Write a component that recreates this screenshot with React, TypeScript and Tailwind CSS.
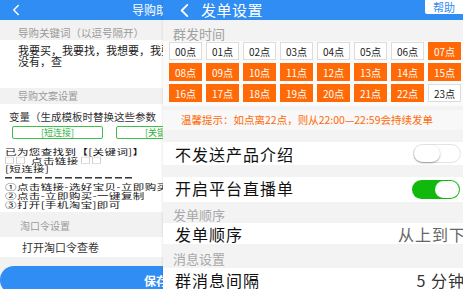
const HOURS = Array.from({ length: 24 }, (_, i) => i);
const ACTIVE = new Set([7, 8, 9, 10, 11, 12, 13, 14, 15, 16, 17, 18, 19, 20, 21, 22]);

const Back = ({ size }: { size: number }) => (
  <svg width={size} height={size} viewBox="0 0 16 16" className="shrink-0">
    <polyline points="11,2 5,8 11,14" fill="none" stroke="white" strokeWidth="2" strokeLinecap="round" strokeLinejoin="round" />
  </svg>
);

// missing-glyph boxes as the phone shows them
const Box = () => <span className="inline-block w-[9px] h-[10px] mr-[2px] border border-[#cfcfcf]" />;

const Toggle = ({ on }: { on: boolean }) =>
  on ? (
    <div className="relative w-[48px] h-[19px] shrink-0 rounded-full bg-[#10b90c]">
      <div className="absolute right-[1px] top-[1px] w-[24px] h-[17px] rounded-full bg-white" />
    </div>
  ) : (
    <div className="relative w-[48px] h-[19px] shrink-0 rounded-full bg-white border border-[#e3e3e3]">
      <div className="absolute left-0 top-0 w-[26px] h-[17px] rounded-full bg-white shadow-[0_1px_2px_rgba(0,0,0,0.35)]" />
    </div>
  );

const GuidePanel = () => (
  <div className="w-[163px] h-[289px] shrink-0 overflow-hidden bg-[#f2f2f2] flex flex-col">
    <div className="h-[20px] shrink-0 bg-[#2f8df3] flex items-center text-white">
      <div className="ml-[10px]">
        <Back size={12} />
      </div>
      <span className="ml-[110px] shrink-0 text-[12px] whitespace-nowrap">导购助手</span>
    </div>
    <div className="h-[20px] shrink-0 pl-[18px] pt-[6px] text-[10.5px] leading-[14px] text-[#9a9a9a] whitespace-nowrap">
      导购关键词（以逗号隔开）
    </div>
    <div className="h-[48px] shrink-0 bg-white pl-[18px] pt-[5px] text-[11px] leading-[11px] text-[#222] whitespace-nowrap">
      <div>我要买，我要找，我想要，我要</div>
      <div>没有，查</div>
    </div>
    <div className="h-[16px] shrink-0 flex items-end pl-[18px] pb-[1px] text-[10px] text-[#9a9a9a]">
      导购文案设置
    </div>
    <div className="h-[108px] shrink-0 bg-white pt-[7px] whitespace-nowrap overflow-hidden">
      <div className="pl-[9px] text-[10.5px] leading-[12px] text-[#333]">变量（生成模板时替换这些参数</div>
      <div className="flex gap-[13px] pl-[12px] mt-[3px]">
        <div className="w-[91px] h-[13px] shrink-0 border border-[#3cc04a] rounded-[2px] flex items-center justify-center text-[9px] text-[#2fb23e]">
          [短连接]
        </div>
        <div className="w-[91px] h-[13px] shrink-0 border border-[#3cc04a] rounded-[2px] flex items-center justify-center text-[9px] text-[#2fb23e]">
          [关键词]
        </div>
      </div>
      <div className="pl-[5px] mt-[8px] text-[11.5px] leading-[12.6px] tracking-[0.4px] text-[#111] origin-top scale-y-[0.7]">
        <div>已为您查找到【[关键词]】</div>
        <div className="flex items-center h-[12.6px]">
          <Box />
          <Box />
          <span className="ml-[4px]">点击链接</span>
          <span className="ml-[2px]" />
          <Box />
          <Box />
        </div>
        <div>[短连接]</div>
        <div className="h-[12.6px] flex items-center gap-[3px]">
          {Array.from({ length: 13 }, (_, i) => (
            <span key={i} className="w-[7px] h-[2px] bg-[#222]" />
          ))}
        </div>
        <div>①点击链接-选好宝贝-立即购买</div>
        <div>②点击-立即购买-一键复制</div>
        <div>③打开[手机淘宝]即可</div>
      </div>
    </div>
    <div className="h-[25px] shrink-0 flex items-center pl-[20px] pt-[1px] text-[10px] text-[#9a9a9a]">
      淘口令设置
    </div>
    <div className="h-[20px] shrink-0 bg-white flex items-center pl-[22px] text-[11px] text-[#333]">
      打开淘口令查卷
    </div>
    <div className="h-[9px] shrink-0" />
    <div className="h-[28px] shrink-0 bg-[#2f8df3] rounded-l-full flex items-start pt-[6px] pl-[144px] text-white text-[12px] font-bold whitespace-nowrap">
      保存
    </div>
  </div>
);

const SettingsPanel = () => (
  <div className="w-[300px] h-[289px] shrink-0 overflow-hidden bg-[#f3f3f3] flex flex-col shadow-[-1px_0_2px_rgba(0,0,0,0.08)]">
    <div className="h-[20px] shrink-0 bg-[#2f8df3] flex items-center text-white relative">
      <div className="ml-[14px]">
        <Back size={15} />
      </div>
      <span className="ml-[9px] text-[15px] tracking-[0.5px]">发单设置</span>
      <div className="absolute right-0 top-0 w-[38px] h-[14px] bg-white rounded-bl-[2px] flex items-center justify-center text-[11px] text-[#2f8df3]">
        帮助
      </div>
    </div>
    <div className="h-[21px] shrink-0 flex items-end pl-[10px] text-[13px] leading-[14px] text-[#a0a0a0]">
      群发时间
    </div>
    <div className="grid grid-cols-8 gap-x-[4px] gap-y-[3px] pl-[6px] pr-[2px] pt-[1px] bg-[#fbfbfb] pb-[4px]">
      {HOURS.map((h) => (
        <div
          key={h}
          className={
            ACTIVE.has(h)
              ? 'h-[18px] bg-[#ff6a06] flex items-center justify-center text-[10px] text-white'
              : 'h-[18px] bg-white border border-[#dcdcdc] flex items-center justify-center text-[10px] text-[#222]'
          }
        >
          {String(h).padStart(2, '0')}点
        </div>
      ))}
    </div>
    <div className="h-[4px] shrink-0" />
    <div className="h-[20px] shrink-0 bg-[#f8f8f8] flex items-center pl-[18px] text-[10.5px] text-[#ff6a06] whitespace-nowrap">
      温馨提示：如点离22点，则从22:00—22:59会持续发单
    </div>
    <div className="h-[12px] shrink-0" />
    <div className="h-[23px] shrink-0 bg-white flex items-center justify-between pl-[12px] pr-[2px]">
      <span className="text-[16px] tracking-[1px] text-[#111]">不发送产品介绍</span>
      <Toggle on={false} />
    </div>
    <div className="h-[12px] shrink-0" />
    <div className="h-[25px] shrink-0 bg-white flex items-center justify-between pl-[12px] pr-[3px]">
      <span className="text-[16px] tracking-[1px] text-[#111] -mt-[3px]">开启平台直播单</span>
      <Toggle on />
    </div>
    <div className="h-[21px] shrink-0 flex items-end pl-[10px] pb-[1px] text-[13px] leading-[14px] text-[#a8a8a8]">
      发单顺序
    </div>
    <div className="h-[21px] shrink-0 bg-white flex items-center justify-between pl-[12px] whitespace-nowrap">
      <span className="text-[16px] tracking-[1px] text-[#111]">发单顺序</span>
      <span className="text-[16px] tracking-[1px] text-[#666] -mr-[3px] shrink-0">从上到下</span>
    </div>
    <div className="h-[24px] shrink-0 flex items-end pl-[10px] pb-[2px] text-[13px] leading-[14px] text-[#a8a8a8]">
      消息设置
    </div>
    <div className="h-[23px] shrink-0 bg-white flex items-center justify-between pl-[12px] whitespace-nowrap">
      <span className="text-[16px] tracking-[1px] text-[#111]">群消息间隔</span>
      <span className="text-[16px] tracking-[1px] text-[#333] -mr-[2px] shrink-0">5 分钟</span>
    </div>
  </div>
);

export default function App() {
  return (
    <div
      className="w-[463px] h-[289px] flex overflow-hidden bg-white"
      style={{ fontFamily: '"Noto Sans CJK SC", "Noto Sans", sans-serif' }}
    >
      <GuidePanel />
      <SettingsPanel />
    </div>
  );
}
